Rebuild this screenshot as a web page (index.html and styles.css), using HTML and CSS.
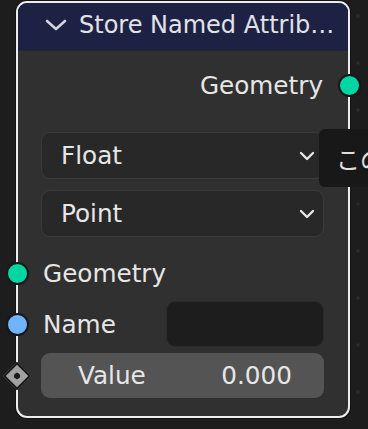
FILE: index.html
```html
<!DOCTYPE html>
<html lang="en">
<head>
    <meta charset="UTF-8">
    <meta name="viewport" content="width=device-width, initial-scale=1.0">
    <title>Store Named Attribute</title>
    <link rel="stylesheet" href="styles.css">
</head>
<body>
    <div id="canvas">
        <div class="node">
            <div class="node-header">
                <svg class="collapse" width="22" height="12" viewBox="0 0 22 12">
                    <path d="M2 2 L11 10 L20 2" fill="none" stroke="#d2d4dc" stroke-width="2.6" stroke-linecap="round" stroke-linejoin="round"/>
                </svg>
                <span class="title">Store Named Attrib…</span>
            </div>
            <div class="node-body">
                <div class="row row-out">
                    <span>Geometry</span>
                    <span class="socket socket-geo socket-right"></span>
                </div>
                <div class="select first">
                    <span>Float</span>
                    <svg width="16" height="10" viewBox="0 0 16 10"><path d="M2 2 L8 8 L14 2" fill="none" stroke="#e6e6e6" stroke-width="2.4" stroke-linecap="round" stroke-linejoin="round"/></svg>
                </div>
                <div class="select">
                    <span>Point</span>
                    <svg width="16" height="10" viewBox="0 0 16 10"><path d="M2 2 L8 8 L14 2" fill="none" stroke="#e6e6e6" stroke-width="2.4" stroke-linecap="round" stroke-linejoin="round"/></svg>
                </div>
                <div class="row row-in geo">
                    <span class="socket socket-geo socket-left"></span>
                    <span>Geometry</span>
                </div>
                <div class="row row-in name">
                    <span class="socket socket-str socket-left"></span>
                    <span>Name</span>
                    <div class="text-field"></div>
                </div>
                <div class="row row-in value">
                    <span class="socket-diamond"><i></i></span>
                    <div class="num-field">
                        <span>Value</span>
                        <span>0.000</span>
                    </div>
                </div>
            </div>
        </div>
        <div class="tooltip">この</div>
    </div>
</body>
</html>
```

FILE: styles.css
```css
* {
    margin: 0;
    padding: 0;
    box-sizing: border-box;
}

html, body {
    width: 368px;
    height: 429px;
    overflow: hidden;
}

body {
    background-color: #1d1d1d;
    background-image: radial-gradient(circle, #2c2c2c 1.5px, transparent 1.7px);
    background-size: 47px 47px;
    background-position: 5.5px -7.5px;
    font-family: "DejaVu Sans", "Noto Sans CJK JP", sans-serif;
    font-size: 24.7px;
    color: #e6e6e6;
}

#canvas {
    position: relative;
    width: 368px;
    height: 429px;
}

.node {
    margin: 1px 0 0 16px;
    width: 334px;
    border: 2px solid #ededed;
    border-radius: 11px;
    background: #303030;
    box-shadow: 0 0 0 1px #141414;
}

.node-header {
    height: 48px;
    display: flex;
    align-items: center;
    background: #1d2244;
    border-radius: 9px 9px 0 0;
    padding-left: 27px;
    border-bottom: 1px solid #262626;
}

.collapse {
    margin-right: 12px;
    margin-top: -3px;
}

.title {
    font-size: 24px;
    color: #e2e2e6;
    white-space: nowrap;
    margin-top: -3px;
}

.node-body {
    padding: 11px 0 18px 0;
}

.row {
    position: relative;
    height: 46px;
    display: flex;
    align-items: center;
}

.row-out {
    justify-content: flex-end;
    padding-right: 25px;
}

.row-in {
    padding-left: 25px;
}

.socket {
    position: absolute;
    top: 50%;
    width: 23px;
    height: 23px;
    margin-top: -11.5px;
    border-radius: 50%;
    border: 2px solid #171717;
}

.socket-left {
    left: -12px;
}

.socket-right {
    right: -13px;
}

.socket-geo {
    background: #00d6a3;
}

.socket-str {
    background: #70b4ff;
}

.socket-diamond {
    position: absolute;
    left: -11px;
    top: 50%;
    width: 20px;
    height: 20px;
    margin-top: -10px;
    transform: rotate(45deg);
    background: #a1a1a1;
    border: 2px solid #171717;
    display: flex;
    align-items: center;
    justify-content: center;
}

.socket-diamond i {
    display: block;
    width: 6px;
    height: 6px;
    border-radius: 50%;
    background: #1a1a1a;
}

.select {
    margin: 0 24px 0 23px;
    height: 47px;
    display: flex;
    align-items: center;
    justify-content: space-between;
    padding: 0 8px 0 19px;
    background: #282828;
    border: 1px solid #3b3b3b;
    border-radius: 9px;
}

.select.first {
    margin-top: 24px;
    margin-bottom: 11px;
}

.geo {
    margin-top: 13px;
}

.name {
    margin-top: 5px;
}

.text-field {
    margin-left: auto;
    margin-right: 24px;
    width: 158px;
    height: 46px;
    background: #1d1d1d;
    border: 1px solid #2b2b2b;
    border-radius: 9px;
}

.value {
    margin-top: 6px;
    height: 45px;
    padding-left: 23px;
    padding-right: 24px;
}

.num-field {
    flex: 1;
    height: 45px;
    display: flex;
    align-items: center;
    justify-content: space-between;
    padding: 0 32px 0 37px;
    background: #545454;
    border-radius: 9px;
}

.tooltip {
    position: absolute;
    left: 319px;
    top: 128px;
    width: 120px;
    height: 58px;
    padding-left: 17px;
    display: flex;
    align-items: center;
    background: #181818;
    border-radius: 6px;
    font-family: "Noto Sans CJK JP", sans-serif;
    font-size: 24px;
    color: #e0e0e0;
}
```
